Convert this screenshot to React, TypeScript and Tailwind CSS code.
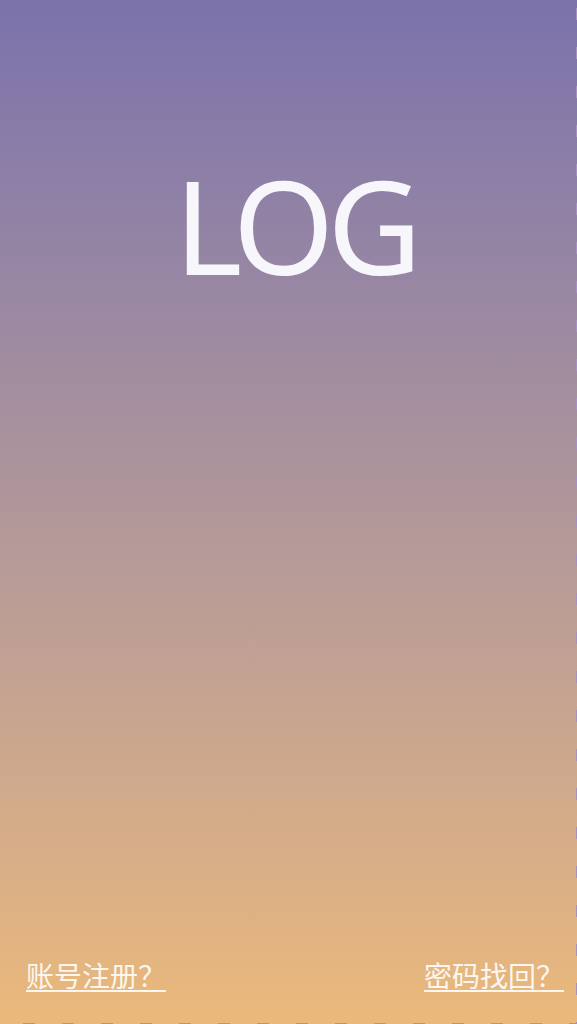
const App = () => {
  return (
    <div className="relative h-[1024px] w-full overflow-hidden bg-gradient-to-b from-[#7b72ac] to-[#ebb97a] flex flex-col">
      {/* title */}
      <h1 className="mt-[160px] pl-[12px] text-center text-[130px] leading-none tracking-[-7px] font-normal text-[#f6f6fb] font-['Noto_Sans','Open_Sans',sans-serif]">
        LOG
      </h1>

      <div className="flex-1" />

      {/* bottom links */}
      <div className="flex justify-between pl-[26px] pr-[13px] pb-[32px] font-['Noto_Sans_CJK_SC',sans-serif] text-[28px] leading-none text-[#fbf6f0]">
        <a className="border-b-2 border-[#fbf6f0] pb-[1px] whitespace-pre">账号注册？</a>
        <a className="border-b-2 border-[#fbf6f0] pb-[1px] whitespace-pre">密码找回？</a>
      </div>

      {/* dashed edges */}
      <div className="absolute right-0 top-0 h-full w-px bg-[repeating-linear-gradient(to_bottom,transparent_0px,transparent_8px,#a990c3_8px,#a990c3_20px,transparent_20px,transparent_39px)]" />
      <div className="absolute bottom-0 left-0 h-px w-full bg-[repeating-linear-gradient(to_right,transparent_0px,transparent_23px,#a990c3_23px,#a990c3_35px,transparent_35px,transparent_39px)]" />
    </div>
  );
};

export default App;
